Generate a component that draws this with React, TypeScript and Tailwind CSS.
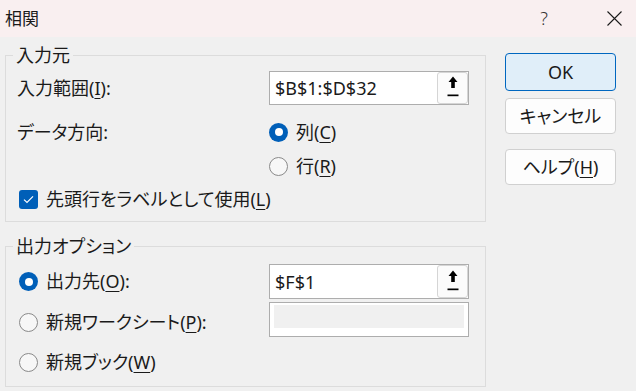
import React from 'react';

const font = "font-['Noto_Sans','Noto_Sans_CJK_JP',sans-serif] [font-feature-settings:'palt']";

function Radio({ checked }: { checked?: boolean }) {
  return checked ? (
    <span className="w-[19px] h-[19px] rounded-full bg-[#005fb8] flex items-center justify-center shrink-0">
      <span className="w-[8px] h-[8px] rounded-full bg-white" />
    </span>
  ) : (
    <span className="w-[19px] h-[19px] rounded-full border border-[#8a8a8a] bg-[#f7f7f7] shrink-0" />
  );
}

function Checkbox() {
  return (
    <span className="w-[19px] h-[19px] rounded-[3px] bg-[#005fb8] flex items-center justify-center shrink-0">
      <svg width="11" height="9" viewBox="0 0 11 9">
        <path d="M1 4.6 L4 7.4 L10 1.4" fill="none" stroke="white" strokeWidth="1.2" />
      </svg>
    </span>
  );
}

function RefButton() {
  return (
    <span className="ml-auto w-[31px] h-full border border-[#d5d5d5] rounded-[3px] bg-[#fbfbfb] flex items-center justify-center">
      <svg className="-mt-[3px]" width="12" height="21" viewBox="0 0 12 21">
        <polygon points="6,0.5 1.5,6 4.2,6 4.2,12 7.8,12 7.8,6 10.5,6" fill="#000" />
        <rect x="0.5" y="18.5" width="11" height="1.7" fill="#000" />
      </svg>
    </span>
  );
}

function RangeInput({ value }: { value: string }) {
  return (
    <div className="w-[200px] h-full border border-[#adadad] bg-white flex items-center">
      <span className="pl-[5px] text-[18px] leading-none">{value}</span>
      <RefButton />
    </div>
  );
}

function Key({ k }: { k: string }) {
  return (
    <>
      (<span className="underline underline-offset-[3px] decoration-1">{k}</span>)
    </>
  );
}

function DialogButton({ children, primary, className }: { children: React.ReactNode; primary?: boolean; className?: string }) {
  return (
    <button
      className={
        'w-[111px] rounded-[4px] border text-[18px] flex items-center justify-center ' +
        (primary ? 'bg-[#e0eef9] border-[#0067c0] ' : 'bg-[#fdfdfd] border-[#d0d0d0] ') +
        (className ?? '')
      }
    >
      {children}
    </button>
  );
}

export default function App() {
  return (
    <div className={`w-[636px] h-[391px] overflow-hidden bg-[#f0f0f0] text-[#1a1a1a] ${font}`}>
      <div className="h-[37px] bg-[#f9eff0] flex items-center">
        <span className="ml-[5px] text-[17px]">相関</span>
        <span className="ml-auto text-[18px] font-light text-[#333]">?</span>
        <svg className="ml-[59px] mr-[14px]" width="15" height="15" viewBox="0 0 15 15">
          <path d="M0.5 0.5 L14.5 14.5 M14.5 0.5 L0.5 14.5" stroke="#1a1a1a" strokeWidth="1.1" />
        </svg>
      </div>

      <div className="flex text-[18px]">
        <div className="ml-[5px] w-[481px]">
          <fieldset className="mt-[7px] border border-[#dcdcdc] pb-[6px]">
            <legend className="ml-[7px] px-[3px] leading-[22px]">入力元</legend>
            <div className="mt-[5px] h-[34px] grid grid-cols-[263px_1fr] items-center">
              <span className="pl-[11px]">
                入力範囲<Key k="I" />:
              </span>
              <RangeInput value="$B$1:$D$32" />
            </div>
            <div className="mt-[10px] grid grid-cols-[263px_1fr]">
              <span className="pl-[11px] h-[34px] flex items-center">データ方向:</span>
              <div className="flex flex-col">
                <label className="h-[34px] flex items-center gap-[8px]">
                  <Radio checked />
                  <span>
                    列<Key k="C" />
                  </span>
                </label>
                <label className="h-[34px] flex items-center gap-[8px]">
                  <Radio />
                  <span>
                    行<Key k="R" />
                  </span>
                </label>
              </div>
            </div>
            <label className="h-[32px] pl-[13px] flex items-center gap-[8px]">
              <Checkbox />
              <span>
                先頭行をラベルとして使用<Key k="L" />
              </span>
            </label>
          </fieldset>

          <fieldset className="mt-[13px] border border-[#dcdcdc] pb-[7px]">
            <legend className="ml-[7px] px-[3px] leading-[22px]">出力オプション</legend>
            <div className="mt-[7px] h-[35px] grid grid-cols-[263px_1fr] items-center">
              <label className="pl-[13px] flex items-center gap-[8px]">
                <Radio checked />
                <span>
                  出力先<Key k="O" />:
                </span>
              </label>
              <RangeInput value="$F$1" />
            </div>
            <div className="mt-[3px] h-[35px] grid grid-cols-[263px_1fr] items-center">
              <label className="pl-[13px] pt-[5px] flex items-center gap-[8px]">
                <Radio />
                <span>
                  新規ワークシート<Key k="P" />:
                </span>
              </label>
              <div className="w-[200px] h-full border border-[#adadad] bg-white px-[4px] pt-[2px] pb-[8px]">
                <div className="h-full bg-[#f0f0f0]" />
              </div>
            </div>
            <label className="mt-[8px] h-[34px] pl-[13px] flex items-center gap-[8px]">
              <Radio />
              <span>
                新規ブック<Key k="W" />
              </span>
            </label>
          </fieldset>
        </div>

        <div className="ml-[19px] mt-[16px] flex flex-col">
          <DialogButton primary className="h-[38px]">OK</DialogButton>
          <DialogButton className="mt-[7px] h-[36px]">キャンセル</DialogButton>
          <DialogButton className="mt-[15px] h-[36px]">
            <span>
              ヘルプ<Key k="H" />
            </span>
          </DialogButton>
        </div>
      </div>
    </div>
  );
}
